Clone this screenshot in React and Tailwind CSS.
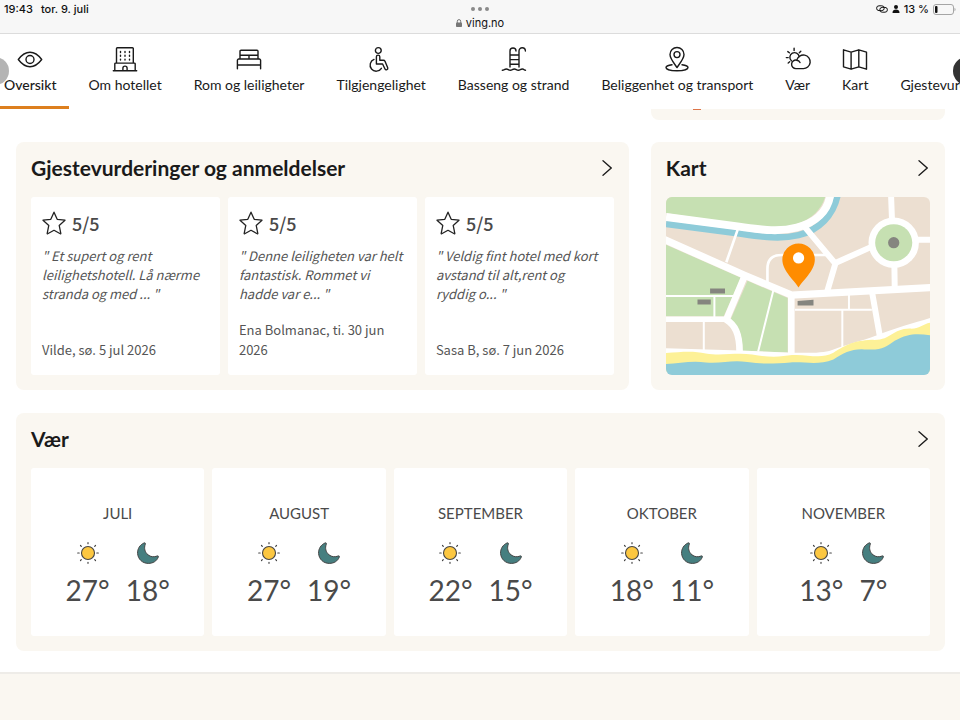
import React from 'react';

function NavIcon({ children }) {
  return (
    <svg
      viewBox="0 0 24 24"
      className="h-6 w-6 overflow-visible"
      fill="none"
      stroke="currentColor"
      strokeWidth="1.4"
      strokeLinecap="round"
      strokeLinejoin="round"
      aria-hidden="true"
    >
      {children}
    </svg>
  );
}

const navItems = [
  {
    label: 'Oversikt',
    active: true,
    icon: (
      <>
        <path d="M.3 12.500C4 7.600 8 5.300 12 5.300s8 2.300 11.700 7.200C20 17.400 16 19.700 12 19.700S4 17.400.3 12.500z" />
        <circle cx="12" cy="12.500" r="4" />
      </>
    ),
  },
  {
    label: 'Om hotellet',
    icon: (
      <>
        <path d="M3.500 16V1.600a.8.8 0 0 1 .8-.8h15.200a.8.8 0 0 1 .8.8V16M1.800 23.500V17a.9.9 0 0 1 .9-.9h18.600a.9.9 0 0 1 .9.9v6.500M.3 23.700h23.400M9.900 23.500v-2.300a2.100 2.100 0 0 1 4.200 0v2.300" />
        <path d="M7.500 4.500v1M12 4.500v1M16.500 4.500v1M7.500 8.300v1M12 8.300v1M16.500 8.300v1M7.500 12.100v1M12 12.100v1M16.500 12.100v1" />
      </>
    ),
  },
  {
    label: 'Rom og leiligheter',
    icon: (
      <path d="M3 12V4.200a1 1 0 0 1 1-1h16a1 1 0 0 1 1 1V12M3 8.300h18M12 8.300V12M.4 21.800v-8.500A1.300 1.300 0 0 1 1.700 12h20.600a1.300 1.300 0 0 1 1.300 1.300v8.500M.4 18h23.200" />
    ),
  },
  {
    label: 'Tilgjengelighet',
    icon: (
      <>
        <circle cx="9.300" cy="3.500" r="2.900" />
        <path d="M7.400 17V9.800a1.700 1.700 0 0 1 3.400 0v3.400h3.600c.8 0 1.300.4 1.600 1l2.700 6.600c.6 1.800-1.900 2.900-2.700 1.200L13.600 17z" />
        <path d="M5 12.400a6.100 6.100 0 1 0 7.400 8.900" />
      </>
    ),
  },
  {
    label: 'Basseng og strand',
    icon: (
      <path d="M8 20V4a3 3 0 0 1 6 0M17 20V4a3.200 3.200 0 0 1 6.400 0M8 8h9M8 12.600h9M8 17.200h9M.3 23.200c2 0 2-1.200 4-1.200s2 1.200 4 1.200 2-1.200 4-1.200 2 1.200 4 1.200 2-1.200 4-1.200 1.700 1.200 3.200 1.200" />
    ),
  },
  {
    label: 'Beliggenhet og transport',
    icon: (
      <>
        <path d="M12 20.500C8.500 15.500 5 11.500 5 7.500a7 7 0 0 1 14 0c0 4-3.500 8-7 13z" />
        <circle cx="12" cy="7.600" r="3" />
        <path d="M7 17.800c-3.500.5-6 1.300-6 2.700 0 1.900 4.900 3.200 11 3.200s11-1.300 11-3.200c0-1.400-2.500-2.200-6-2.700" />
      </>
    ),
  },
  {
    label: 'Vær',
    icon: (
      <>
        <path d="M10 21.600a4.300 4.300 0 1 1 .8-8.500 6.800 6.800 0 1 1 6.200 8.500zM10.500 13.200c1.800.1 3 1 3.500 2.300" />
        <path d="M5.400 13.800a4.700 4.700 0 1 1 7.800-4.200M.3 10.600h1.900M1.800 4.600l1.600 1.200M8.100 3.500V1.200M13.300 5.800l1.500-1.500M2.200 16l1.500-1.200" />
      </>
    ),
  },
  {
    label: 'Kart',
    icon: (
      <path d="M.5 2.800l7.600 2.400 7.700-2.400 7.700 2.400v17l-7.700-2.400-7.700 2.400-7.600-2.400zM8.100 5.200v17M15.800 2.800v17" />
    ),
  },
  { label: 'Gjestevurderinger', icon: null },
];

const reviews = [
  {
    text: '" Et supert og rent leilighetshotell. Lå nærme stranda og med ... "',
    author: 'Vilde, sø. 5 jul 2026',
  },
  {
    text: '" Denne leiligheten var helt fantastisk. Rommet vi hadde var e... "',
    author: 'Ena Bolmanac, ti. 30 jun 2026',
  },
  {
    text: '" Veldig fint hotel med kort avstand til alt,rent og ryddig o... "',
    author: 'Sasa B, sø. 7 jun 2026',
  },
];

const months = [
  { name: 'JULI', day: 27, night: 18 },
  { name: 'AUGUST', day: 27, night: 19 },
  { name: 'SEPTEMBER', day: 22, night: 15 },
  { name: 'OKTOBER', day: 18, night: 11 },
  { name: 'NOVEMBER', day: 13, night: 7 },
];

function StatusBar() {
  return (
    <div className="grid h-[34px] grid-cols-3 border-b border-[#dcdcdc] bg-[#f7f7f7] px-1 pt-[2px] font-['Inter',sans-serif] text-[11px] leading-[14px] font-medium text-[#111]">
      <div className="flex gap-2">
        <span>19:43</span>
        <span>tor. 9. juli</span>
      </div>
      <div className="flex flex-col items-center">
        <div className="flex h-[14px] items-center gap-[3px]">
          <span className="h-1 w-1 rounded-full bg-[#8a8a8a]" />
          <span className="h-1 w-1 rounded-full bg-[#8a8a8a]" />
          <span className="h-1 w-1 rounded-full bg-[#8a8a8a]" />
        </div>
        <div className="flex items-center gap-1 font-normal">
          <svg viewBox="0 0 6 8" className="h-2 w-1.5" fill="none" aria-hidden="true">
            <rect y="3.500" width="6" height="4.500" rx=".8" fill="#777" />
            <path d="M1.300 4V2.300a1.700 1.700 0 0 1 3.400 0V4" stroke="#777" />
          </svg>
          ving.no
        </div>
      </div>
      <div className="flex h-[14px] items-center justify-end gap-1">
        <svg viewBox="0 0 12 8" className="h-2 w-3" fill="none" stroke="currentColor" aria-hidden="true">
          <rect x=".6" y=".8" width="7.600" height="4.800" rx="2.400" />
          <rect x="3.800" y="2.400" width="7.600" height="4.800" rx="2.400" />
        </svg>
        <svg viewBox="0 0 8 8" className="h-2 w-2" fill="currentColor" aria-hidden="true">
          <circle cx="4" cy="2" r="2" />
          <path d="M.5 8c0-2.500 1.500-3.400 3.500-3.400S7.500 5.500 7.500 8z" />
        </svg>
        <span>13 %</span>
        <svg viewBox="0 0 23 11" className="h-[11px] w-[23px]" fill="none" aria-hidden="true">
          <rect x=".5" y=".5" width="20" height="10" rx="2.500" stroke="#a5a5a5" />
          <rect x="2" y="2" width="2.500" height="7" rx="1" fill="#111" />
          <path d="M21.500 3.800c1.400.6 1.400 2.800 0 3.400z" fill="#a5a5a5" />
        </svg>
      </div>
    </div>
  );
}

function Nav() {
  return (
    <nav className="relative overflow-hidden bg-white">
      <button
        type="button"
        aria-label="Forrige"
        className="absolute top-[23px] -left-[19px] h-7 w-7 rounded-full bg-[#b4b4b4]"
      />
      <ul className="relative -ml-2 flex gap-2">
        {navItems.map((item) => (
          <li key={item.label} className="shrink-0">
            <a
              href="#"
              className={`flex h-[75px] flex-col items-center border-b-[3px] px-3 pt-[13px] text-sm leading-7 whitespace-nowrap text-[#1a1a1a] ${
                item.active ? 'border-[#dd7f1e] font-medium' : 'border-transparent'
              }`}
            >
              <NavIcon>{item.icon}</NavIcon>
              {item.label}
            </a>
          </li>
        ))}
      </ul>
      <button
        type="button"
        aria-label="Neste"
        className="absolute top-[23px] -right-[21px] h-7 w-7 rounded-full bg-[#333]"
      />
    </nav>
  );
}

function Panel({ title, children }) {
  return (
    <section className="rounded-lg bg-[#faf7f1] px-[15px] pb-[15px]">
      <a href="#" className="flex h-[55px] items-center justify-between pr-[2px] pb-1 text-[#1a1a1a]">
        <h2 className="text-[21px] leading-7 font-bold">{title}</h2>
        <svg viewBox="0 0 10 16" className="h-4 w-2.5" fill="none" stroke="currentColor" strokeWidth="1.3" strokeLinecap="round" aria-hidden="true">
          <path d="M1 .8L9.200 8 1 15.200" />
        </svg>
      </a>
      {children}
    </section>
  );
}

function Star() {
  return (
    <svg viewBox="0 0 24 24" className="h-6 w-6" fill="none" stroke="#222" strokeWidth="1.3" strokeLinejoin="round" aria-hidden="true">
      <path d="M12 1.200l3.200 7.100 7.800.9-5.800 5.200 1.600 7.900c.1.400-.2.600-.5.400L12 19.300l-6.300 3.400c-.3.200-.6 0-.5-.4l1.600-7.900L1 9.200l7.800-.9z" />
    </svg>
  );
}

function ReviewCard({ review }) {
  return (
    <article className="flex flex-col rounded-[3px] bg-white px-[11px] pt-[14px] pb-[15px] font-['Noto_Sans_CJK_JP',sans-serif] text-[13px] leading-5 text-[#555]">
      <div className="mb-[11px] flex items-center gap-1.5">
        <Star />
        <span className="text-lg leading-6 font-medium text-[#4a4a4a]">5/5</span>
      </div>
      <p className="leading-[19px] italic">{review.text}</p>
      <p className="mt-auto">{review.author}</p>
    </article>
  );
}

function MapDrawing() {
  return (
    <svg viewBox="46 171 797 537" className="block w-full rounded-md" fill="none" role="img" aria-label="Kart">
      <path fill="#ecdfd1" d="M46 171h797v537H46z" />
      <path fill="#c6e0b2" d="M46 171h480c-12 40-42 65-75 78-50 20-110 14-160 9L46 219z" />
      <path fill="#c6e0b2" d="M46 315l226 100-52 116H46zM292 424l121 52v164l-136-5c0-48-12-74-37-92z" />
      <path stroke="#8ecbd9" strokeWidth="20" d="M46 252l215 28c70 10 125 20 185 6 62-15 104-60 117-118" />
      <g stroke="#fff">
        <path strokeWidth="24" d="M46 231l210 28c70 9 125 20 185 4 58-15 92-50 100-95" />
        <path strokeWidth="22" d="M40 299l243 108 142 60 420-23" />
        <path strokeWidth="20" d="M283 410l-55 131c26 16 40 42 40 98M424 465v180" />
        <path strokeWidth="17" d="M40 540h190" />
        <path strokeWidth="18" d="M465 262l92 110-25 85M557 370l112-50M725 165l3 80M735 375l1 68M800 300h48M668 460l23 130" />
        <path strokeWidth="8" d="M352 430v-42q0-42 42-42h140M262 270l-34 98" />
        <path strokeWidth="6" d="M46 470h204M192 470v64M160 545v88M370 452l-46 185M435 511h232M598 465v46M578 511v120" />
      </g>
      <circle cx="733" cy="309" r="76" fill="#fff" />
      <circle cx="733" cy="309" r="56" fill="#c6e0b2" />
      <circle cx="733" cy="309" r="17" fill="#85857f" />
      <path fill="#fff" d="M46 627l224 7 160 7c60 1 95-1 115-8 60-22 80-24 140-46 50-20 110-36 158-51v170H46z" />
      <path fill="#fdf197" d="M46 642c50-5 85-7 120 1 50 8 90-4 140 3 50 10 90 7 120 2 50-3 85 14 125-7 45-27 60-35 115-39 60 4 60-33 115-34 25 3 40-14 62-18v150H46z" />
      <path fill="#8ecbd9" d="M46 675c40-3 80-11 120-5 50 4 80-9 125-1 50 8 90 4 130 1 50-2 85 9 130-9 30-20 50-30 85-31 60 5 70-3 100-25 40-24 70-22 107-17v120H46z" />
      <path fill="#85857f" d="M179 447h45v15h-45zM141 480h40v15h-40zM443 485l48-4v17h-48z" />
      <path fill="#ff8c00" d="M446 444c-9-18-49-50-49-84a49 49 0 0 1 98 0c0 34-40 66-49 84z" />
      <circle cx="446" cy="355" r="17" fill="#fff" />
    </svg>
  );
}

function SunIcon() {
  return (
    <svg viewBox="0 0 22 22" className="h-[22px] w-[22px]" fill="none" stroke="#444" strokeLinecap="round" aria-hidden="true">
      <circle cx="11" cy="11" r="6.500" fill="#fcc741" strokeWidth="1.100" />
      <path strokeWidth="1.200" d="M11 .7v1M11 20.300v1M.7 11h1.500M19.800 11h1.500M3.500 3.500l.8.8M17.700 17.700l.8.8M3.500 18.500l.8-.8M17.700 4.300l.8-.8" />
    </svg>
  );
}

function MoonIcon() {
  return (
    <svg viewBox="0 0 22 22" className="h-[22px] w-[22px]" aria-hidden="true">
      <path
        d="M7.200.9C2.800 2.700.3 7 .6 11.500c.4 5.700 4.900 9.900 10.700 9.900 4.700 0 8.500-2.300 10-6.400.3-.9-.3-1.400-1.100-1-3.200 1.300-6.600 1-9.200-1.200C7.600 10 6.900 6.200 8.300 2.200c.3-1-.2-1.600-1.100-1.300z"
        fill="#467f80"
        stroke="#444"
      />
    </svg>
  );
}

function Temperature({ icon, value }) {
  return (
    <div className="flex flex-col items-center gap-2">
      {icon}
      <span className="text-[28px] leading-9">{value}°</span>
    </div>
  );
}

export default function App() {
  return (
    <div className="flex min-h-screen flex-col bg-white font-['Lato',sans-serif]">
      <StatusBar />
      <Nav />
      <main className="px-[15px] pb-[21px] pl-4">
        <div className="grid grid-cols-[25fr_12fr] gap-x-[22px]">
          {/* Bottom edge of the card scrolled under the nav */}
          <div className="col-start-2 mb-[22px] h-[11px] overflow-hidden rounded-b-lg bg-[#faf7f1] pl-[42px]">
            <div className="h-px w-2 bg-[#dd7448]" />
          </div>
          <div className="col-start-1 grid">
            <Panel title="Gjestevurderinger og anmeldelser">
              <div className="grid h-[178px] grid-cols-3 gap-2">
                {reviews.map((review) => (
                  <ReviewCard key={review.author} review={review} />
                ))}
              </div>
            </Panel>
          </div>
          <Panel title="Kart">
            <MapDrawing />
          </Panel>
        </div>
        <div className="mt-[23px]">
          <Panel title="Vær">
            <div className="grid grid-cols-5 gap-2">
              {months.map((month) => (
                <div key={month.name} className="rounded-[3px] bg-white pt-[33px] pb-7 text-center text-[#4a4a4a]">
                  <h3 className="mb-[17px] text-[15px] leading-6">{month.name}</h3>
                  <div className="flex justify-center gap-4">
                    <Temperature icon={<SunIcon />} value={month.day} />
                    <Temperature icon={<MoonIcon />} value={month.night} />
                  </div>
                </div>
              ))}
            </div>
          </Panel>
        </div>
      </main>
      <footer className="min-h-12 flex-1 border-t-2 border-[#eeece8] bg-[#faf7f1]" />
    </div>
  );
}
